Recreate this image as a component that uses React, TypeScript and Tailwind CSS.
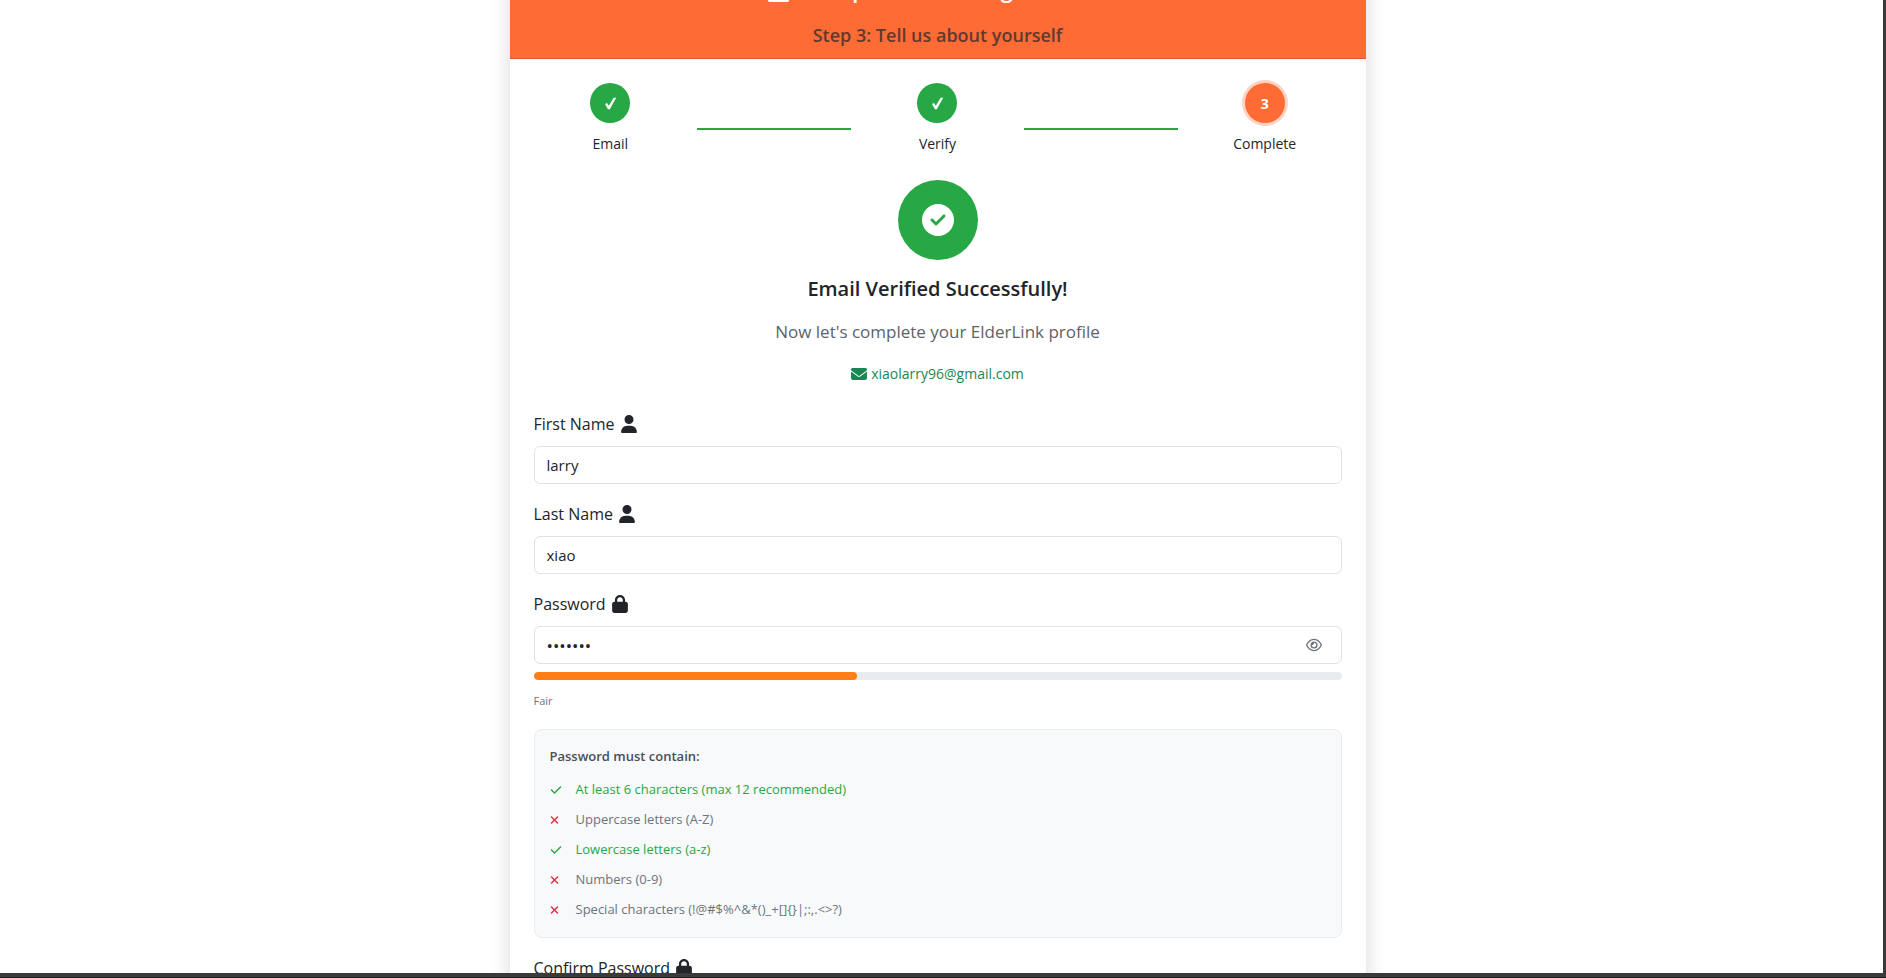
import { useState } from "react"
import clsx from "clsx"
import { FaCheck, FaCircleCheck, FaEnvelope, FaLock, FaRegEye, FaUser, FaUserPlus, FaXmark } from "react-icons/fa6"

const steps = [
    { label: "Email", done: true },
    { label: "Verify", done: true },
    { label: "Complete", done: false },
]

const rules = [
    { label: "At least 6 characters (max 12 recommended)", met: true },
    { label: "Uppercase letters (A-Z)", met: false },
    { label: "Lowercase letters (a-z)", met: true },
    { label: "Numbers (0-9)", met: false },
    { label: "Special characters (!@#$%^&*()_+[]{}|;:,.<>?)", met: false },
]

const inputClass = "block h-[38px] w-full rounded-md border border-[#dee2e6] bg-white px-3 text-[#212529] outline-none"
const labelClass = "mb-2 flex h-7 items-center gap-1.5 text-[16px]"

function StepCheck() {
    return (
        <svg viewBox="0 0 13 13" className="size-[13px] fill-white" aria-hidden="true">
            <path d="M1 7 L3 6 L4.8 8.8 L9.6 .8 L12.2 .8 L5.8 12.2 L4 12.2 Z" />
        </svg>
    )
}

function StepIndicator() {
    return (
        <ol className="flex items-start">
            {steps.map((step, i) => (
                <li key={step.label} className="contents">
                    {i > 0 && <span className="mx-2.5 mt-[45px] h-0.5 flex-1 bg-[#28a745]" />}
                    <div className="flex flex-1 flex-col items-center">
                        <span
                            className={clsx(
                                "flex size-10 items-center justify-center rounded-full text-[14px] font-bold text-white",
                                step.done ? "bg-[#28a745]" : "bg-[#ff6b35] ring-3 ring-[#ffd3c2]"
                            )}
                        >
                            {step.done ? <StepCheck /> : i + 1}
                        </span>
                        <span className="mt-2 text-[14px] leading-[26px]">{step.label}</span>
                    </div>
                </li>
            ))}
        </ol>
    )
}

export default function App() {
    const [firstName, setFirstName] = useState("larry")
    const [lastName, setLastName] = useState("xiao")
    const [password, setPassword] = useState("abcdefg")
    const [showPassword, setShowPassword] = useState(false)

    return (
        <div className="flex h-screen flex-col border-b border-[#202020] bg-[#3a3a3a] pr-[3px] pb-1 font-['Open_Sans','Noto_Sans',sans-serif] text-[#212529]">
            <div className="min-h-0 flex-1 overflow-hidden bg-white pr-2">
                <main className="mx-auto -mt-10 max-w-[856px] bg-white shadow-[0_0_20px_rgba(0,0,0,0.15)]">
                    <header className="flex flex-col items-center border-b border-[#d95b2d] bg-[#ff6b35] pt-2.5 pb-2">
                        <h1 className="flex items-end gap-1 text-[23px] leading-9 font-semibold text-white">
                            <FaUserPlus className="mb-1 h-6 w-[30px]" />
                            Complete Your Registration
                        </h1>
                        <p className="mt-3.5 text-[18px] leading-[30px] font-semibold text-[#613a2e]">Step 3: Tell us about yourself</p>
                    </header>

                    <div className="p-6">
                        <StepIndicator />

                        <section className="mt-[23px] flex flex-col items-center">
                            <div className="flex size-20 items-center justify-center rounded-full bg-[#28a745]">
                                <FaCircleCheck className="size-8 text-white" />
                            </div>
                            <h2 className="mt-3 text-[20px] leading-[34px] font-semibold">Email Verified Successfully!</h2>
                            <p className="mt-2.5 text-[17px] leading-8 text-[#5c636a]">Now let's complete your ElderLink profile</p>
                            <p className="mt-3.5 flex items-center gap-1 text-[14px] leading-6 text-[#198754]">
                                <FaEnvelope className="size-4" />
                                xiaolarry96@gmail.com
                            </p>
                        </section>

                        <form className="mt-6" onSubmit={(e) => e.preventDefault()}>
                            <div className="mb-4">
                                <label htmlFor="firstName" className={labelClass}>
                                    First Name <FaUser className="h-[18px] w-4" />
                                </label>
                                <input
                                    id="firstName"
                                    className={clsx(inputClass, "text-[15px]")}
                                    value={firstName}
                                    onChange={(e) => setFirstName(e.target.value)}
                                />
                            </div>

                            <div className="mb-4">
                                <label htmlFor="lastName" className={labelClass}>
                                    Last Name <FaUser className="h-[18px] w-4" />
                                </label>
                                <input
                                    id="lastName"
                                    className={clsx(inputClass, "text-[15px]")}
                                    value={lastName}
                                    onChange={(e) => setLastName(e.target.value)}
                                />
                            </div>

                            <label htmlFor="password" className={labelClass}>
                                Password <FaLock className="h-[18px] w-4" />
                            </label>
                            <div className="relative">
                                <input
                                    id="password"
                                    type={showPassword ? "text" : "password"}
                                    className={clsx(inputClass, "text-[17px]")}
                                    value={password}
                                    onChange={(e) => setPassword(e.target.value)}
                                />
                                <button
                                    type="button"
                                    aria-label="Show password"
                                    className="absolute inset-y-0 right-5 text-[#6c757d]"
                                    onClick={() => setShowPassword(!showPassword)}
                                >
                                    <FaRegEye className="size-4" />
                                </button>
                            </div>
                            <div className="mt-2 h-2 overflow-hidden rounded-full bg-[#e9ecef]">
                                <div className="h-full w-2/5 rounded-full bg-[#fd7e14]" />
                            </div>
                            <p className="mt-3 text-[11px] leading-[18px] text-[#6c757d]">Fair</p>

                            <div className="mt-[19px] rounded-lg border border-[#e9ecef] bg-[#f8f9fa] px-[15px] pt-4 pb-3">
                                <h3 className="mb-[9px] text-[13px] leading-5 font-semibold text-[#495057]">Password must contain:</h3>
                                <ul>
                                    {rules.map((rule) => (
                                        <li
                                            key={rule.label}
                                            className={clsx("flex h-[30px] items-center text-[13px]", rule.met ? "text-[#28a745]" : "text-[#6c757d]")}
                                        >
                                            <span className="w-[26px]">
                                                {rule.met ? <FaCheck className="size-3" /> : <FaXmark className="h-3 w-[9px] text-[#dc3545]" />}
                                            </span>
                                            {rule.label}
                                        </li>
                                    ))}
                                </ul>
                            </div>

                            <label htmlFor="confirmPassword" className="mt-4 mb-2 flex h-7 items-center gap-1.5 text-[16px]">
                                Confirm Password <FaLock className="h-[18px] w-4" />
                            </label>
                            <input id="confirmPassword" type="password" className={clsx(inputClass, "text-[17px]")} />
                        </form>
                    </div>
                </main>
            </div>
        </div>
    )
}
